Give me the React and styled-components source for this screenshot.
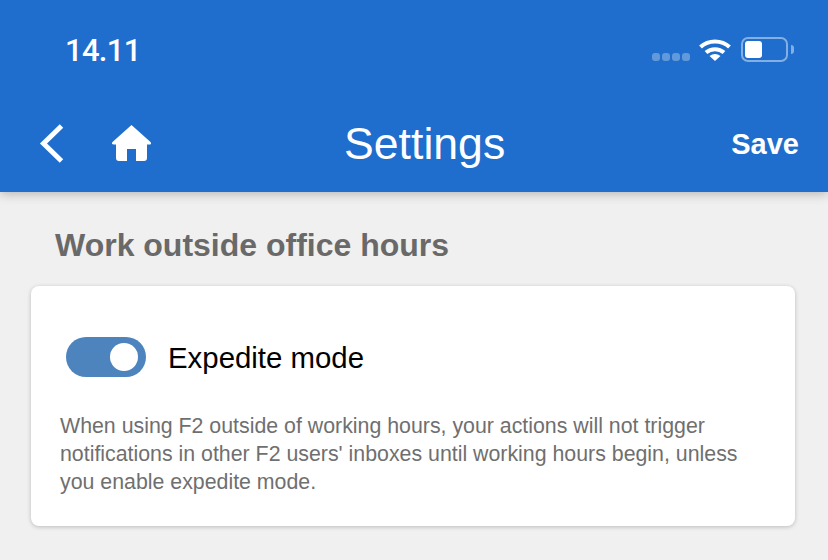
import React from "react";
import styled, { createGlobalStyle } from "styled-components";

const Global = createGlobalStyle`
  html, body { margin: 0; padding: 0; background: #f0f0f0; }
  body { font-family: "Liberation Sans", Arial, sans-serif; }
  * { box-sizing: border-box; }
`;
const Page = styled.div`
  width: 828px; height: 560px; overflow: hidden; background: #f0f0f0;
`;
const Header = styled.header`
  height: 192px; background: #1f6dcc; color: #fff;
  box-shadow: 0 2px 10px rgba(0,0,0,.25);
  display: flex; flex-direction: column;
`;
const StatusBar = styled.div`
  height: 96px; display: flex; align-items: center; justify-content: space-between;
  padding: 4px 40px 0 65px;
`;
const Time = styled.span`
  font-family: Roboto, sans-serif; font-size: 31px; font-weight: 500; letter-spacing: -0.7px;
`;
const StatusIcons = styled.div`
  display: flex; align-items: center; margin-top: -1px;
`;
const Dots = styled.div`
  display: flex; gap: 2px; margin-right: 9px; margin-top: 15px;
`;
const Dot = styled.i`
  width: 8px; height: 8px; border-radius: 3px; background: rgba(255,255,255,.3); display: block;
`;
const Battery = styled.div`
  width: 47px; height: 25px; border: 2px solid rgba(255,255,255,.45); border-radius: 7px;
  padding: 2px; margin-left: 10px; position: relative;
  &::after {
    content: ""; position: absolute; right: -8px; top: 6px; width: 3px; height: 9px;
    background: rgba(255,255,255,.45); border-radius: 0 3px 3px 0;
  }
`;
const BatteryFill = styled.div`
  width: 17px; height: 100%; background: #fff; border-radius: 3px;
`;
const NavBar = styled.nav`
  flex: 1; display: flex; align-items: center; padding: 0 29px 0 36px;
`;
const IconButton = styled.button`
  background: none; border: 0; padding: 0; color: inherit; display: flex;
  margin-right: ${p => p.$gap || 0}px; margin-bottom: 2px;
`;
const Title = styled.h1`
  flex: 1; margin: 0; padding-right: 34px; text-align: center; font: 400 44.6px "Liberation Sans", Arial, sans-serif;
`;
const Save = styled.button`
  background: none; border: 0; padding: 0; color: #fff; font: 700 29px "Liberation Sans", Arial, sans-serif;
`;
const Content = styled.main`
  padding: 35px 32px 0 31px;
`;
const SectionTitle = styled.h2`
  margin: 0 0 23px 24px; color: #696969; font: 700 32px/36px "Liberation Sans", Arial, sans-serif;
`;
const Card = styled.section`
  width: 764px; height: 240px; background: #fff; border-radius: 8px;
  box-shadow: 0 1px 4px rgba(0,0,0,.22); padding: 51px 29px 0;
`;
const ToggleRow = styled.div`
  display: flex; align-items: center; gap: 22px; padding-left: 6px; height: 40px;
`;
const Toggle = styled.div`
  width: 80px; height: 40px; border-radius: 20px; background: #4d84bd; padding: 6px 8px;
  display: flex; justify-content: flex-end;
`;
const Knob = styled.div`
  width: 28px; height: 28px; border-radius: 50%; background: #fff;
`;
const Label = styled.span`
  font: 400 29.4px "Liberation Sans", Arial, sans-serif; color: #000; padding-top: 1px;
`;
const Help = styled.p`
  margin: 35px 0 0; color: #6f6f6f; font: 400 21.33px/28px "Liberation Sans", Arial, sans-serif;
`;

export default function App() {
  return (
    <Page>
      <Global />
      <Header>
        <StatusBar>
          <Time>14.11</Time>
          <StatusIcons>
            <Dots><Dot /><Dot /><Dot /><Dot /></Dots>
            <svg width="32" height="24" viewBox="0 0 32 24" fill="none" stroke="#fff" strokeWidth="4">
              <path d="M1.5 9 C9.5 1.5 22.5 1.5 30.5 9" />
              <path d="M7 14.5 C12 10 20 10 25 14.5" />
              <path d="M10.5 18 L16 23 L21.5 18 C18 15.2 14 15.2 10.5 18 Z" fill="#fff" stroke="none" />
            </svg>
            <Battery><BatteryFill /></Battery>
          </StatusIcons>
        </StatusBar>
        <NavBar>
          <IconButton $gap={46} aria-label="Back">
            <svg width="30" height="40" viewBox="0 0 30 40" fill="none" stroke="#fff" strokeWidth="5">
              <path d="M25.500 3 L7.500 20.500 L25.500 38" />
            </svg>
          </IconButton>
          <IconButton aria-label="Home">
            <svg width="40" height="36" viewBox="0 0 40 36" fill="#fff">
              <path d="M19.500 0 L38.500 17 C39.500 18.500 39 19.500 37.500 19.500 H35 V33 C35 35 34 36 32 36 H24 V24 H15 V36 H7 C5 36 4 35 4 33 V19.500 H1.500 C0 19.500 -0.500 18.500 0.500 17 Z" />
            </svg>
          </IconButton>
          <Title>Settings</Title>
          <Save>Save</Save>
        </NavBar>
      </Header>
      <Content>
        <SectionTitle>Work outside office hours</SectionTitle>
        <Card>
          <ToggleRow>
            <Toggle><Knob /></Toggle>
            <Label>Expedite mode</Label>
          </ToggleRow>
          <Help>When using F2 outside of working hours, your actions will not trigger notifications in other F2 users' inboxes until working hours begin, unless you enable expedite mode.</Help>
        </Card>
      </Content>
    </Page>
  );
}
